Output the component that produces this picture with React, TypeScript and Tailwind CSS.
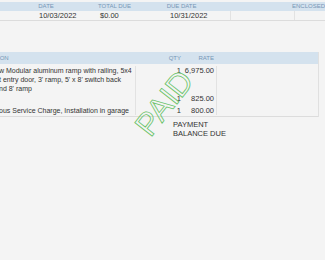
export default function App() {
  return (
    <div className="relative w-[325px] h-[260px] overflow-hidden bg-[#f4f4f4] font-['Liberation_Sans',Arial,sans-serif] text-[#333]">
      {/* Summary table */}
      <div className="pt-[2px]">
        <div className="flex h-[9px] bg-[#d4e2ee] text-[6px] leading-[9px] text-[#7696b6] uppercase">
          <div className="w-[35px]" />
          <div className="w-[61px] pl-[4px]">Date</div>
          <div className="w-[70px] pl-[4px]">Total Due</div>
          <div className="w-[65px] pl-[4px]">Due Date</div>
          <div className="w-[64px]" />
          <div className="flex-1 pl-[3px] whitespace-nowrap">Enclosed</div>
        </div>
        <div className="flex h-[10px] text-[7.5px] leading-[10px] border-b border-[#dcdcdc]">
          <div className="w-[35px]" />
          <div className="w-[61px] pl-[4px]">10/03/2022</div>
          <div className="w-[70px] pl-[4px]">$0.00</div>
          <div className="w-[65px] pl-[4px] border-r border-[#e2e2e2]">10/31/2022</div>
          <div className="w-[64px] border-r border-[#e2e2e2]" />
          <div className="flex-1" />
        </div>
      </div>

      {/* Items table */}
      <div className="mt-[31px] w-[319px] border-r border-[#e0e0e0]">
        <div className="flex h-[12px] bg-[#d4e2ee] text-[6px] leading-[12px] text-[#7696b6] uppercase">
          <div className="w-[136px] overflow-hidden whitespace-nowrap">
            <span className="-ml-[2px] inline-block">ion</span>
          </div>
          <div className="w-[46px] text-right pr-[1px]">Qty</div>
          <div className="w-[35px] text-right pr-[3px]">Rate</div>
          <div className="flex-1" />
        </div>
        <div className="flex text-[7.5px] leading-[9px] border-b border-[#dcdcdc] pt-[2px] pb-[1px]">
          <div className="w-[136px] overflow-hidden whitespace-nowrap border-r border-[#e2e2e2] text-[7px]">
            <div className="-ml-[1px]">
              <div>w Modular aluminum ramp with railing, 5x4</div>
              <div>t entry door, 3' ramp, 5' x 8' switch back</div>
              <div>nd 8' ramp</div>
              <div className="h-[1px]" />
              <div>&nbsp;</div>
              <div className="h-[3px]" />
              <div>ous Service Charge, Installation in garage</div>
            </div>
          </div>
          <div className="w-[46px] text-right pr-[1px]">
            <div>1</div>
            <div>&nbsp;</div>
            <div>&nbsp;</div>
            <div className="h-[1px]" />
            <div>1</div>
            <div className="h-[3px]" />
            <div>1</div>
          </div>
          <div className="w-[35px] text-right pr-[2px] border-r border-[#e2e2e2]">
            <div>6,975.00</div>
            <div>&nbsp;</div>
            <div>&nbsp;</div>
            <div className="h-[1px]" />
            <div>825.00</div>
            <div className="h-[3px]" />
            <div>800.00</div>
          </div>
          <div className="flex-1" />
        </div>
      </div>

      {/* Totals */}
      <div className="ml-[173px] mt-[3px] text-[7.5px] leading-[9px] uppercase">
        <div>Payment</div>
        <div>Balance Due</div>
      </div>

      {/* PAID stamp */}
      <div className="absolute left-[124px] top-[87px] w-[80px] text-center text-[32px] leading-[32px] text-transparent [-webkit-text-stroke:0.8px_#66c266] -rotate-[52deg]">
        PAID
      </div>
    </div>
  )
}
